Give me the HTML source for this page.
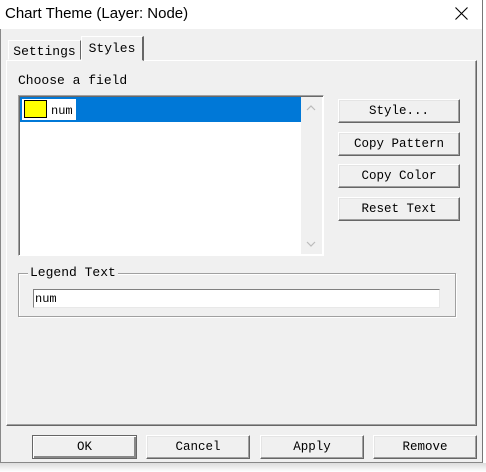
<!DOCTYPE html>
<html><head><style>
*{box-sizing:border-box;margin:0;padding:0}
body{width:486px;height:472px;background:#fff;position:relative;overflow:hidden;font-family:"Liberation Mono","Noto Sans CJK SC",monospace;font-size:12px;color:#000}
.win{position:absolute;left:0;top:0;width:483px;height:463px;background:#f0f0f0;border-left:1px solid #888;border-right:1px solid #777;border-bottom:1px solid #888}
.shadow{position:absolute;left:0;top:463px;width:486px;height:9px;background:linear-gradient(#ddd,#fff)}
.title{position:absolute;left:0;top:0;width:482px;height:29px;background:#fff;font-family:"Liberation Sans",sans-serif;font-size:15px;padding:5px 0 0 5px}
.abs{position:absolute}
.btn{position:absolute;background:#f0f0f0;border:1px solid;border-color:#fff #666 #666 #fff;box-shadow:inset -1px -1px 0 #a0a0a0,inset 1px 1px 0 #e4e4e4;text-align:center;line-height:23px;font-size:12.5px}
.tab{position:absolute;border:1px solid;border-color:#fff #666 transparent #fff;text-align:center;font-size:13px}
.panel{position:absolute;left:6px;top:60px;width:471px;height:366px;border:1px solid;border-color:#fff #666 #666 #fff;box-shadow:inset -1px -1px 0 #a0a0a0}
</style></head><body>
<div class="win"></div>
<div class="shadow"></div>
<div class="title">Chart Theme (Layer: Node)</div>
<svg class="abs" style="left:455px;top:7px" width="13" height="13"><path d="M0.5 0.5L12.5 12.5M12.5 0.5L0.5 12.5" stroke="#000" stroke-width="1.1"/></svg>
<div class="panel"></div>
<div class="tab" style="left:8px;top:40px;width:73px;height:20px;line-height:21px">Settings</div>
<div class="tab" style="left:81px;top:36px;width:63px;height:25px;line-height:23px;background:#f0f0f0;border-right:2px solid #666">Styles</div>
<div class="abs" style="left:18px;top:73px;font-size:13px">Choose a field</div>
<div class="abs" style="left:18px;top:95px;width:306px;height:161px;background:#fff;border:1px solid;border-color:#a0a0a0 #fff #fff #a0a0a0;box-shadow:inset 1px 1px 0 #696969"></div>
<div class="abs" style="left:20px;top:97px;width:281px;height:25px;background:#0078d7"></div>
<div class="abs" style="left:22px;top:99px;width:54px;height:21px;background:#fff"></div>
<div class="abs" style="left:24px;top:100px;width:23px;height:18px;background:#ffff00;border:1px solid #000"></div>
<div class="abs" style="left:51px;top:104px;font-size:12px">num</div>
<div class="abs" style="left:301px;top:97px;width:21px;height:157px;background:#f0f0f0"></div>
<svg class="abs" style="left:306px;top:105px" width="10" height="6"><path d="M1 5L5 1L9 5" stroke="#bbb" fill="none" stroke-width="1.2"/></svg>
<svg class="abs" style="left:306px;top:241px" width="10" height="6"><path d="M1 1L5 5L9 1" stroke="#bbb" fill="none" stroke-width="1.2"/></svg>
<div class="btn" style="left:338px;top:99px;width:122px;height:24px">Style...</div>
<div class="btn" style="left:338px;top:132px;width:122px;height:24px">Copy Pattern</div>
<div class="btn" style="left:338px;top:164px;width:122px;height:24px">Copy Color</div>
<div class="btn" style="left:338px;top:197px;width:122px;height:24px">Reset Text</div>
<div class="abs" style="left:18px;top:273px;width:438px;height:44px;border:1px solid #a0a0a0;box-shadow:1px 1px 0 #fff,inset 1px 1px 0 #fff"></div>
<div class="abs" style="left:28px;top:265px;background:#f0f0f0;padding:0 2px;font-size:13px">Legend Text</div>
<div class="abs" style="left:33px;top:289px;width:407px;height:19px;background:#fff;border:1px solid;border-color:#808080 #e8e8e8 #e8e8e8 #808080;font-size:12px;line-height:18px;padding-left:1px">num</div>
<div class="btn" style="left:32px;top:435px;width:105px;height:24px;border-color:#666;box-shadow:inset 1px 1px 0 #fff,inset -2px -2px 0 #888">OK</div>
<div class="btn" style="left:146px;top:435px;width:104px;height:24px">Cancel</div>
<div class="btn" style="left:260px;top:435px;width:104px;height:24px">Apply</div>
<div class="btn" style="left:373px;top:435px;width:104px;height:24px">Remove</div>
</body></html>
